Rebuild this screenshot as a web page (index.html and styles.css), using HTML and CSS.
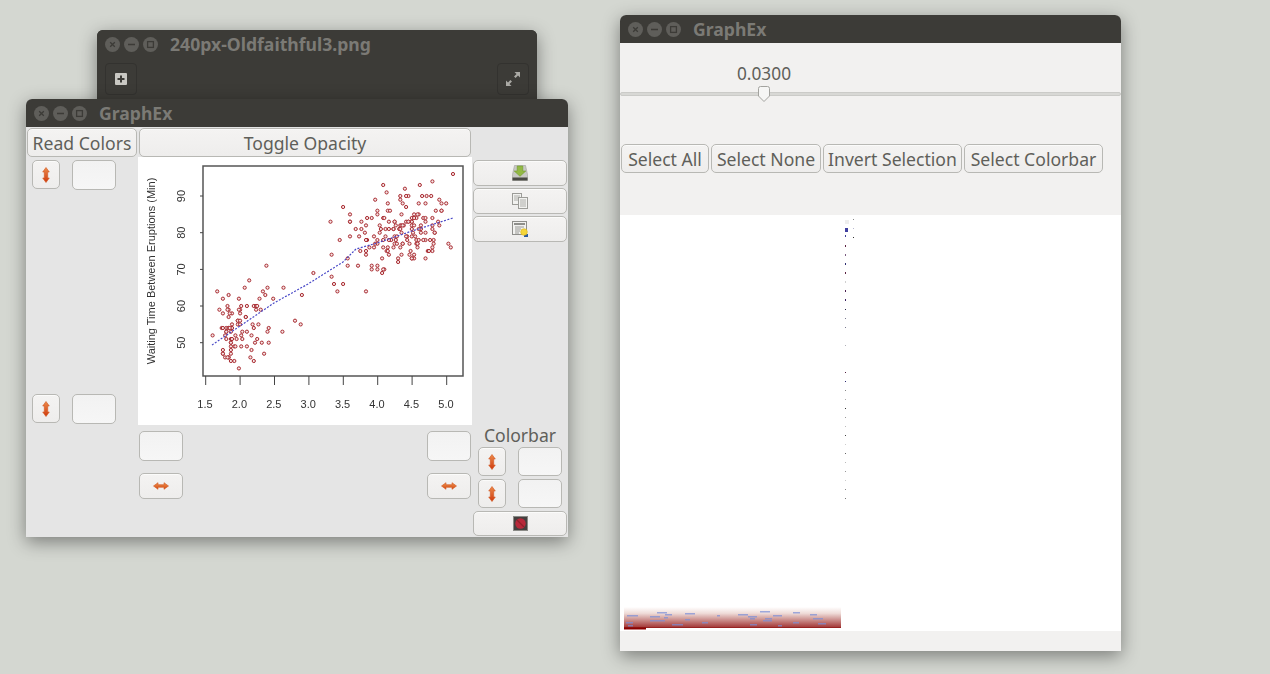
FILE: index.html
```html
<!DOCTYPE html>
<html lang="en">
<head>
<meta charset="utf-8">
<title>GraphEx</title>
<link rel="stylesheet" href="styles.css">
</head>
<body>
<svg class="defs" width="0" height="0" aria-hidden="true">
  <defs>
    <linearGradient id="arrowV" x1="0" y1="0" x2="0" y2="1"><stop offset="0" stop-color="#ec8a4a"/><stop offset="1" stop-color="#cf3a0e"/></linearGradient>
    <linearGradient id="arrowH" x1="0" y1="0" x2="0" y2="1"><stop offset="0" stop-color="#ee9250"/><stop offset="1" stop-color="#d4480f"/></linearGradient>
    <symbol id="wm-close" viewBox="0 0 15 15"><circle cx="7.5" cy="7.5" r="7.5" fill="#5f5e5a"/><path d="M5.2 5.2l4.6 4.6M9.8 5.2l-4.6 4.6" stroke="#3c3b37" stroke-width="1.3"/></symbol>
    <symbol id="wm-min" viewBox="0 0 15 15"><circle cx="7.5" cy="7.5" r="7.5" fill="#5f5e5a"/><path d="M4 7.5h7" stroke="#3c3b37" stroke-width="1.5"/></symbol>
    <symbol id="wm-max" viewBox="0 0 15 15"><circle cx="7.5" cy="7.5" r="7.5" fill="#5f5e5a"/><rect x="4.6" y="4.6" width="5.8" height="5.8" fill="none" stroke="#3c3b37" stroke-width="1.3"/></symbol>
    <symbol id="arrow-v" viewBox="0 0 10 16"><path d="M5 .5L8.300 5H6.700v6h1.600L5 15.500 1.700 11h1.600V5H1.700z" fill="url(#arrowV)" stroke="#d2551e" stroke-width=".6"/></symbol>
    <symbol id="arrow-h" viewBox="0 0 16 10"><path d="M.5 5L5 1.700v2h6v-2L15.500 5 11 8.300v-2H5v2z" fill="url(#arrowH)" stroke="#d2551e" stroke-width=".6"/></symbol>
  </defs>
</svg>

<section class="window window-image">
  <header class="titlebar">
    <span class="wm"><svg class="wm-btn"><use href="#wm-close"/></svg><svg class="wm-btn"><use href="#wm-min"/></svg><svg class="wm-btn"><use href="#wm-max"/></svg></span>
    <span class="title">240px-Oldfaithful3.png</span>
  </header>
  <div class="dark-tools">
    <button class="dark-btn" aria-label="Add">
      <svg width="12" height="12" viewBox="0 0 12 12"><rect width="12" height="12" rx="1" fill="#c9c8c3"/><path d="M6 2.500v7M2.500 6h7" stroke="#3c3b37" stroke-width="2"/></svg>
    </button>
    <button class="dark-btn" aria-label="Fullscreen">
      <svg width="16" height="16" viewBox="0 0 16 16"><path d="M9.500 1H15v5.500L13 4.500 10.600 7 9 5.400 11.500 3zM6.500 15H1V9.500L3 11.500 5.400 9 7 10.600 4.500 13z" fill="#aaa9a4"/></svg>
    </button>
  </div>
</section>

<section class="window window-main">
  <header class="titlebar">
    <span class="wm"><svg class="wm-btn"><use href="#wm-close"/></svg><svg class="wm-btn"><use href="#wm-min"/></svg><svg class="wm-btn"><use href="#wm-max"/></svg></span>
    <span class="title">GraphEx</span>
  </header>
  <div class="main-body">
    <button class="btn label-btn">Read Colors</button>
    <button class="btn label-btn">Toggle Opacity</button>
    <span></span>

    <div class="left-col">
      <div class="axis-row">
        <button class="btn arrow-btn" aria-label="Flip"><svg class="arrow-v"><use href="#arrow-v"/></svg></button>
        <input class="field" type="text" aria-label="Y max">
      </div>
      <div class="axis-row">
        <button class="btn arrow-btn" aria-label="Flip"><svg class="arrow-v"><use href="#arrow-v"/></svg></button>
        <input class="field" type="text" aria-label="Y min">
      </div>
    </div>

    <div class="plot-wrap">
      <svg id="plot" class="plot" viewBox="0 0 334 268" width="334" height="268">
        <rect class="plot-bg" width="334" height="268"/>
        <rect class="plot-box" x="65" y="9" width="260" height="210"/>
        <path class="plot-tick" d="M62 185.700h3M62 149h3M62 112.400h3M62 75.700h3M62 39h3M67.700 219v9M102.100 219v9M136.500 219v9M170.900 219v9M205.300 219v9M239.700 219v9M274.100 219v9M308.700 219v9"/>
        <g id="points"></g>
        <polyline class="plot-line" points="74,188 102,169 136,146 170,127 205,105 218,92 239,86 274,74 315,61"/>
        <g class="plot-text">
          <text transform="rotate(-90 13 114)" x="13" y="114" class="middle">Waiting Time Between Eruptions (Min)</text>
          <text transform="rotate(-90 43 185.700)" x="43" y="185.700" class="middle">50</text>
          <text transform="rotate(-90 43 149)" x="43" y="149" class="middle">60</text>
          <text transform="rotate(-90 43 112.400)" x="43" y="112.400" class="middle">70</text>
          <text transform="rotate(-90 43 75.700)" x="43" y="75.700" class="middle">80</text>
          <text transform="rotate(-90 43 39)" x="43" y="39" class="middle">90</text>
          <text x="67" y="247" class="middle">1.5</text>
          <text x="101.400" y="247" class="middle">2.0</text>
          <text x="135.800" y="247" class="middle">2.5</text>
          <text x="170.200" y="247" class="middle">3.0</text>
          <text x="204.600" y="247" class="middle">3.5</text>
          <text x="239" y="247" class="middle">4.0</text>
          <text x="273.400" y="247" class="middle">4.5</text>
          <text x="308" y="247" class="middle">5.0</text>
        </g>
      </svg>
    </div>

    <div class="tool-col">
      <button class="btn tool-btn" aria-label="Save">
        <svg width="16" height="16" viewBox="0 0 16 16"><path d="M2.500.5h11l2 9V15.500H.5V9.500z" fill="#c9c9c5" stroke="#a0a09c" stroke-width=".6"/><rect x=".5" y="12.500" width="15" height="3" fill="#4a4a45"/><path d="M5.200 1h5.600v5h3L8 11.300 2.200 6h3z" fill="#93b944" stroke="#6f9a2a" stroke-width=".6"/></svg>
      </button>
      <button class="btn tool-btn" aria-label="Copy">
        <svg width="16" height="16" viewBox="0 0 16 16"><rect x=".5" y=".5" width="9" height="11" fill="#f2f2f0" stroke="#9c9c98"/><rect x="6.500" y="4.500" width="9" height="11" fill="#f2f2f0" stroke="#9c9c98"/><path d="M2 3h6M2 5h4M2 7h4M8 7h6M8 9h6M8 11h6M8 13h6" stroke="#9c9c98" stroke-width=".8"/></svg>
      </button>
      <button class="btn tool-btn" aria-label="Properties">
        <svg width="16" height="16" viewBox="0 0 16 16"><rect x=".5" y=".5" width="14" height="13" fill="#f2f2f0" stroke="#8f8f8b"/><rect x="2" y="2" width="11" height="2" fill="#8f8f8b"/><path d="M3 6h9M3 8h6M3 10h5M3 12h4" stroke="#8f8f8b" stroke-width=".9"/><rect x="12" y="13" width="4" height="3" fill="#2a5aa0"/><circle cx="12" cy="11" r="3.300" fill="#f4d63a" stroke="#d9b41e" stroke-width=".6"/></svg>
      </button>
    </div>

    <div class="range-col">
      <div class="range-fields">
        <input class="field" type="text" aria-label="X min">
        <input class="field" type="text" aria-label="X max">
      </div>
      <div class="range-fields">
        <button class="btn h-btn" aria-label="Flip"><svg class="arrow-h"><use href="#arrow-h"/></svg></button>
        <button class="btn h-btn" aria-label="Flip"><svg class="arrow-h"><use href="#arrow-h"/></svg></button>
      </div>
    </div>

    <div class="colorbar-col">
      <div class="colorbar-label">Colorbar</div>
      <div class="colorbar-row">
        <button class="btn arrow-btn" aria-label="Flip"><svg class="arrow-v"><use href="#arrow-v"/></svg></button>
        <input class="field" type="text" aria-label="Colorbar max">
      </div>
      <div class="colorbar-row">
        <button class="btn arrow-btn" aria-label="Flip"><svg class="arrow-v"><use href="#arrow-v"/></svg></button>
        <input class="field" type="text" aria-label="Colorbar min">
      </div>
      <button class="btn tool-btn clear-btn" aria-label="Clear">
        <svg width="15" height="15" viewBox="0 0 15 15"><rect x=".5" y=".5" width="14" height="14" fill="#45403f" stroke="#8a8a86"/><circle cx="7.500" cy="7.500" r="5.200" fill="#b8283a"/><path d="M4 4l7 7" stroke="#8f1f2a" stroke-width="1.200"/></svg>
      </button>
    </div>
  </div>
</section>

<section class="window window-select">
  <header class="titlebar">
    <span class="wm"><svg class="wm-btn"><use href="#wm-close"/></svg><svg class="wm-btn"><use href="#wm-min"/></svg><svg class="wm-btn"><use href="#wm-max"/></svg></span>
    <span class="title">GraphEx</span>
  </header>
  <div class="select-body">
    <div class="slider-value">0.0300</div>
    <div class="slider">
      <div class="slider-track"></div>
      <svg class="slider-thumb" width="12" height="16" viewBox="0 0 12 16"><path d="M2.500.5h7a2 2 0 0 1 2 2V10L6 15.500.5 10V2.500a2 2 0 0 1 2-2z" fill="#f6f6f5" stroke="#a3a39f"/></svg>
    </div>
    <div class="select-actions">
      <button class="btn label-btn sel-all">Select All</button>
      <button class="btn label-btn sel-none">Select None</button>
      <button class="btn label-btn sel-inv">Invert Selection</button>
      <button class="btn label-btn sel-bar">Select Colorbar</button>
    </div>
    <svg id="canvas" class="canvas" viewBox="0 0 501 416" width="501" height="416">
      <defs>
        <linearGradient id="strip" x1="0" y1="0" x2="0" y2="1">
          <stop offset="0" stop-color="#ffffff"/>
          <stop offset=".3" stop-color="#efdcd8"/>
          <stop offset=".95" stop-color="#a53c3b"/>
          <stop offset="1" stop-color="#8b0a0a"/>
        </linearGradient>
      </defs>
      <rect width="501" height="416" fill="#fff"/>
      <rect x="4" y="392" width="217" height="21" fill="url(#strip)"/>
      <rect x="4" y="412.500" width="22" height="2" fill="#8b0000"/>
      <g id="streaks" class="streaks"></g>
      <g id="dots"></g>
    </svg>
  </div>
</section>
<script src="app.js"></script>
</body>
</html>
```
FILE: styles.css
```css
* { box-sizing: border-box; }
html, body { margin: 0; height: 100%; }
body {
  position: relative;
  width: 1270px;
  height: 674px;
  overflow: hidden;
  background: #d4d7d1;
  font-family: "Noto Sans", "Open Sans", sans-serif;
  color: #5f5f5a;
}
.defs { position: absolute; }

.window {
  position: absolute;
  display: flex;
  flex-direction: column;
  border-radius: 6px 6px 0 0;
  box-shadow: 0 5px 18px rgba(0, 0, 0, .42);
}
.window-image { left: 97px; top: 30px; width: 440px; height: 80px; background: #3c3b37; }
.window-main { left: 26px; top: 99px; width: 542px; height: 438px; background: #e5e5e5; }
.window-select { left: 620px; top: 15px; width: 501px; height: 636px; background: #f2f1f0; }

.titlebar {
  flex: none;
  display: flex;
  align-items: center;
  height: 28px;
  padding-left: 8px;
  background: #3c3b37;
  border-radius: 6px 6px 0 0;
}
.wm { display: flex; gap: 4px; }
.wm-btn { width: 15px; height: 15px; display: block; }
.title {
  margin-left: 12px;
  font-size: 17.6px;
  font-weight: 700;
  line-height: 28px;
  color: #7b7a75;
}

.dark-tools {
  display: flex;
  justify-content: space-between;
  padding: 5px 8px 0;
}
.dark-btn {
  display: flex;
  align-items: center;
  justify-content: center;
  width: 32px;
  height: 32px;
  padding: 0;
  border: 1px solid #33322f;
  border-radius: 4px;
  background: #3c3b37;
}

.btn {
  display: flex;
  align-items: center;
  justify-content: center;
  padding: 0;
  font: 17.6px/1 "Noto Sans", "Open Sans", sans-serif;
  color: #5f5f5a;
  background: linear-gradient(#f4f3f2, #eeedec);
  border: 1px solid #b8b8b4;
  border-radius: 5px;
  box-shadow: inset 0 1px 0 #fbfbfa;
  white-space: nowrap;
}
.label-btn { padding-top: 2px; }
.field {
  display: block;
  width: 44px;
  height: 30px;
  padding: 0;
  background: linear-gradient(#f2f2f2, #f6f6f6);
  border: 1px solid #b8b8b4;
  border-radius: 5px;
}

.main-body {
  display: grid;
  grid-template-columns: 110px 332px 94px;
  grid-template-rows: 29px 268px 1fr;
  column-gap: 2px;
  padding: 1px 0 0 1px;
  flex: 1;
}
.left-col {
  display: flex;
  flex-direction: column;
  justify-content: space-between;
  padding: 3px 0 1px 5px;
}
.axis-row { display: flex; gap: 12px; }
.arrow-btn { width: 28px; height: 29px; }
.arrow-v { width: 10px; height: 16px; display: block; }
.arrow-h { width: 16px; height: 10px; display: block; }

.plot-wrap { margin: 0 -1px; }
.plot { display: block; filter: blur(.35px); }
.plot-bg { fill: #fff; }
.plot-box { fill: none; stroke: #555; stroke-width: 1.5; }
.plot-tick { fill: none; stroke: #444; stroke-width: 1; }
.plot-line { fill: none; stroke: #4a4ac8; stroke-width: 1.2; stroke-dasharray: 2 1.5; }
.plot-text text { font: 11px "Liberation Sans", Arial, sans-serif; fill: #333; }
.plot-text .middle { text-anchor: middle; dominant-baseline: central; }
.pt { fill: #f6e6e6; stroke: #a82a30; stroke-width: 1; }

.tool-col {
  display: flex;
  flex-direction: column;
  gap: 2px;
  padding-top: 3px;
}
.tool-btn { width: 94px; height: 26px; flex: none; }
.clear-btn { height: 25px; }

.range-col {
  grid-column: 2;
  display: flex;
  flex-direction: column;
  gap: 12px;
  padding-top: 6px;
}
.range-fields { display: flex; justify-content: space-between; }
.h-btn { width: 44px; height: 26px; }

.colorbar-col {
  display: flex;
  flex-direction: column;
  gap: 3px;
}
.colorbar-label {
  height: 19px;
  font-size: 17.6px;
  line-height: 21px;
  text-align: center;
  white-space: nowrap;
}
.colorbar-row { display: flex; gap: 12px; padding-left: 5px; }
.colorbar-row .field { width: 44px; height: 29px; }

.select-body { display: flex; flex-direction: column; flex: 1; }
.slider-value {
  width: 100px;
  margin: 18px 0 0 94px;
  font-size: 17.3px;
  line-height: 25px;
  text-align: center;
}
.slider { position: relative; height: 16px; }
.slider-track {
  height: 4px;
  margin-top: 6px;
  background: #d8d8d5;
  border: 1px solid #cbcbc8;
  border-radius: 2px;
}
.slider-thumb { position: absolute; left: 138px; top: 0; }
.select-actions { display: flex; gap: 2px; margin-top: 42px; padding-left: 1px; }
.select-actions .btn { height: 29px; }
.sel-all { width: 88px; }
.sel-none { width: 110px; }
.sel-inv { width: 139px; }
.sel-bar { width: 139px; }
.canvas { display: block; margin-top: 42px; }
.streaks { fill: #7a8ed8; opacity: .7; filter: blur(.5px); }
```
FILE: app.js
```js
var SVGNS = "http://www.w3.org/2000/svg";

var faithful = [3.6,79,1.8,54,3.333,74,2.283,62,4.533,85,2.883,55,4.7,88,3.6,85,1.95,51,4.35,85,1.833,54,3.917,84,4.2,78,1.75,47,4.7,83,2.167,52,1.75,62,4.8,84,1.6,52,4.25,79,1.8,51,1.75,47,3.45,78,3.067,69,4.533,74,3.6,83,1.967,55,4.083,76,3.85,78,4.433,79,4.3,73,4.467,77,3.367,66,4.033,80,3.833,74,2.017,52,1.867,48,4.833,80,1.833,59,4.783,90,4.35,80,1.883,58,4.567,84,1.75,58,4.533,73,3.317,83,3.833,64,2.1,53,4.633,82,2,59,4.8,75,4.716,90,1.833,54,4.833,80,1.733,54,4.883,83,3.717,71,1.667,64,4.567,77,4.317,81,2.233,59,4.5,84,1.75,48,4.8,82,1.817,60,4.4,92,4.167,78,4.7,78,2.067,65,4.7,73,4.033,82,1.967,56,4.5,79,4,71,1.983,62,5.067,76,2.017,60,4.567,78,3.883,76,3.6,83,4.133,75,4.333,82,4.1,70,2.633,65,4.067,73,4.933,88,3.95,76,4.517,80,2.167,48,4,86,2.2,60,4.333,90,1.867,50,4.817,78,1.833,63,4.3,72,4.667,84,3.75,75,1.867,51,4.9,82,2.483,62,4.367,88,2.1,49,4.5,83,4.05,81,1.867,47,4.7,84,1.783,52,4.85,86,3.683,81,4.733,75,2.3,59,4.9,89,4.417,79,1.7,59,4.633,81,2.317,50,4.6,85,1.817,59,4.417,87,2.617,53,4.067,69,4.25,77,1.967,56,4.6,88,3.767,81,1.917,45,4.5,82,2.267,55,4.65,90,1.867,45,4.167,83,2.8,56,4.333,89,1.833,46,4.383,82,1.883,51,4.933,86,2.033,53,3.733,79,4.233,81,2.233,60,4.533,82,4.817,77,4.333,76,1.983,59,4.633,80,2.017,49,5.1,96,1.8,53,5.033,77,4,77,2.4,65,4.6,81,3.567,71,4,70,4.5,81,4.083,93,1.8,53,3.967,89,2.2,45,4.15,86,2,58,3.833,78,3.5,66,4.583,76,2.367,63,5,88,1.933,52,4.617,93,1.917,49,2.083,57,4.583,77,3.333,68,4.167,81,4.333,81,4.5,73,2.417,50,4,85,4.167,74,1.883,55,4.583,77,4.25,83,3.767,83,2.033,51,4.433,78,4.083,84,1.833,46,4.417,83,2.183,55,4.8,81,1.833,57,4.8,76,4.1,84,3.966,77,4.233,81,3.5,87,4.366,77,2.25,51,4.667,78,2.1,60,4.35,82,4.133,91,1.867,53,4.6,78,1.783,46,4.367,77,3.85,84,1.933,49,4.5,83,2.383,71,4.7,80,1.867,49,3.833,75,3.417,64,4.233,76,2.4,53,4.8,94,2,55,4.15,76,1.867,50,4.267,82,1.75,54,4.483,75,4,78,4.117,79,4.083,78,4.267,78,3.917,70,4.55,79,4.083,70,2.417,54,4.183,86,2.217,50,4.45,90,1.883,54,1.85,54,4.283,77,3.95,79,2.333,64,4.15,75,2.35,47,4.933,86,2.9,63,4.583,85,3.833,82,2.083,57,4.367,82,2.133,67,4.35,74,2.2,54,4.45,83,3.567,73,4.5,73,4.15,88,3.817,80,3.917,71,4.45,83,2,56,4.283,79,4.767,78,4.533,84,1.85,58,4.25,83,1.983,43,2.25,60,4.75,75,4.117,81,2.15,46,4.417,90,1.817,46,4.467,74];

var points = document.getElementById("points");
for (var i = 0; i < faithful.length; i += 2) {
  var c = document.createElementNS(SVGNS, "circle");
  c.setAttribute("cx", (67.7 + (faithful[i] - 1.5) * 68.7).toFixed(1));
  c.setAttribute("cy", (185.7 - (faithful[i + 1] - 50) * 3.667).toFixed(1));
  c.setAttribute("r", "1.6");
  c.setAttribute("class", "pt");
  points.appendChild(c);
}

function addRect(parent, x, y, w, h, fill) {
  var r = document.createElementNS(SVGNS, "rect");
  r.setAttribute("x", x);
  r.setAttribute("y", y);
  r.setAttribute("width", w);
  r.setAttribute("height", h);
  if (fill) r.setAttribute("fill", fill);
  parent.appendChild(r);
}

/* blue streaks: [x0, x1, y] in canvas coordinates */
var streaks = [[6,13,407],[8,13,410],[7,18,400],[30,40,401],[37,47,397],[45,52,399],[30,45,405],[44,48,402],[52,63,409],[65,75,398],[65,70,404],[82,88,407],[97,100,400],[118,128,399],[128,137,401],[130,135,403],[130,137,409],[143,152,405],[145,152,403],[153,162,400],[140,150,396],[158,162,410],[173,179,407],[190,197,399],[193,203,403],[198,206,408],[173,180,397]];
var streakGroup = document.getElementById("streaks");
streaks.forEach(function (s) { addRect(streakGroup, s[0], s[2], s[1] - s[0], 1.5); });

/* scattered marks right of the strip */
var dots = document.getElementById("dots");
addRect(dots, 225, 5, 4, 4, "#eeeeee");
addRect(dots, 225, 13, 3, 4, "#3f3fa0");
var ys = [20,30,39,48,57,66,75,84,94,103,112,130,157,166,175,184,193,202,211,220,229,238,247,256,265,274,283];
var cols = ["#3f3f9a","#5a2040","#7a5a80","#2a2a70","#5a2040","#d0d0d0","#4a2050","#3a2060","#222244","#7a7a90","#7a7a90","#b0b0b8","#552040","#2a2a70","#888","#aaa","#333","#999","#bbb","#444","#ccc","#666","#bbb","#999","#ccc","#888","#777"];
ys.forEach(function (y, i) { addRect(dots, 225, y, 1, i < 8 ? 2 : 1, cols[i]); });
addRect(dots, 233, 4, 1, 1, "#888");
addRect(dots, 233, 13, 1, 1, "#b8b8d0");
addRect(dots, 233, 22, 1, 1, "#333");
```
